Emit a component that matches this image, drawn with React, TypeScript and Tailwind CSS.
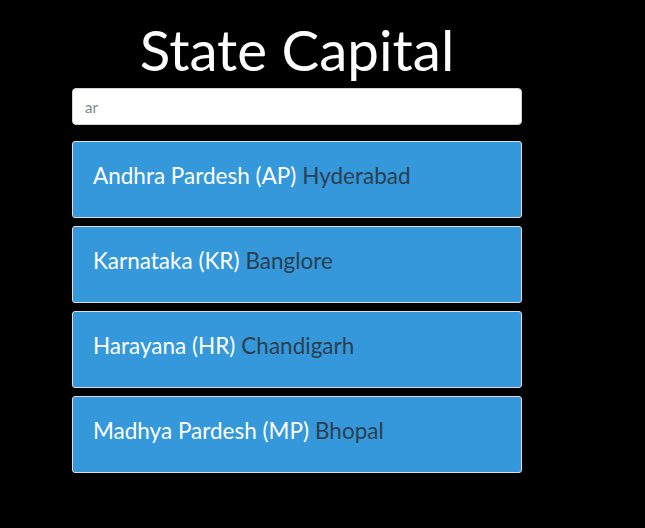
const states = [
  { name: 'Andhra Pardesh', code: 'AP', capital: 'Hyderabad' },
  { name: 'Karnataka', code: 'KR', capital: 'Banglore' },
  { name: 'Harayana', code: 'HR', capital: 'Chandigarh' },
  { name: 'Madhya Pardesh', code: 'MP', capital: 'Bhopal' },
]

export default function App() {
  return (
    <div className="min-h-[528px] bg-black font-['Lato',sans-serif]">
      <div className="ml-[72px] w-[450px] pt-[18px]">
        <h1 className="text-center text-[56.5px] leading-[62px] text-white">State Capital</h1>
        <input
          className="mt-[8px] block h-[37px] w-full rounded-[4px] border border-[#ced4da] bg-white px-[12px] text-[15px] text-[#7b8a8b] outline-none"
          defaultValue="ar"
        />
        <div className="mt-[16px] flex flex-col gap-[8px]">
          {states.map((s) => (
            <div
              key={s.code}
              className="h-[77px] rounded-[3px] border border-[#dddddd] bg-[#3498db] px-[20px] pt-[20px] text-[22.5px] leading-[28px]"
            >
              <span className="text-white">
                {s.name} ({s.code})
              </span>
              <span className="ml-[6px] text-[#2c3e50]">{s.capital}</span>
            </div>
          ))}
        </div>
      </div>
    </div>
  )
}
